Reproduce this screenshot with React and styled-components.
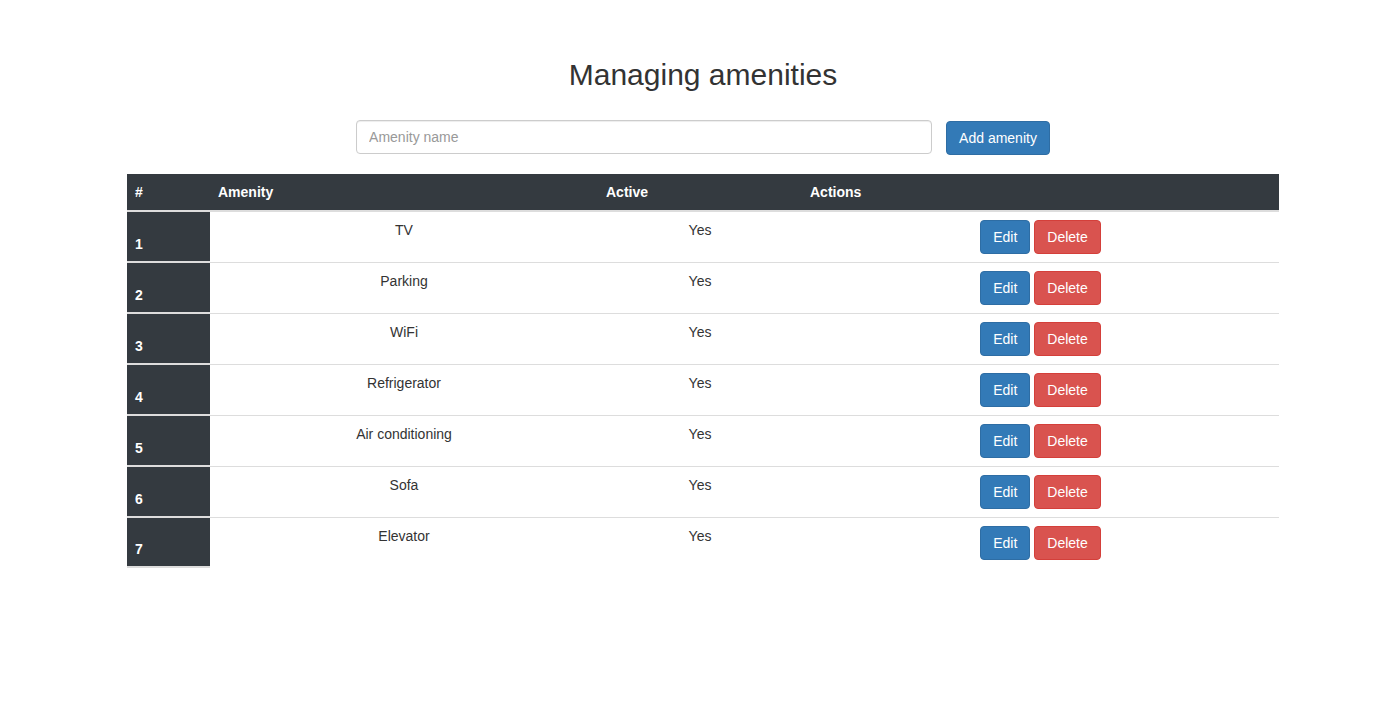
import React from 'react';
import styled, { createGlobalStyle } from 'styled-components';

const amenities = [
  { id: 1, name: 'TV', active: true },
  { id: 2, name: 'Parking', active: true },
  { id: 3, name: 'WiFi', active: true },
  { id: 4, name: 'Refrigerator', active: true },
  { id: 5, name: 'Air conditioning', active: true },
  { id: 6, name: 'Sofa', active: true },
  { id: 7, name: 'Elevator', active: true },
];

const GlobalStyle = createGlobalStyle`
  * { box-sizing: border-box; }
  body {
    margin: 0;
    background: #fff;
    color: #333;
    font-family: "Liberation Sans", Arial, Helvetica, sans-serif;
    font-size: 14px;
    line-height: 1.42857143;
  }
`;

const Page = styled.div`
  display: flex;
  flex-direction: column;
  align-items: center;
  padding: 58px 0 40px 7px;
`;

const Title = styled.h2`
  margin: 0 0 29px;
  font-size: 30px;
  font-weight: 500;
  line-height: 1.1;
  color: #333;
`;

const Form = styled.form`
  display: flex;
  align-items: flex-start;
  gap: 14px;
  margin-bottom: 19px;
`;

const Input = styled.input`
  width: 576px;
  height: 34px;
  padding: 6px 12px;
  border: 1px solid #ccc;
  border-radius: 4px;
  font: inherit;
  color: #555;
  box-shadow: inset 0 1px 1px rgba(0, 0, 0, 0.075);
  &::placeholder { color: #999; }
`;

const Button = styled.button`
  display: inline-block;
  height: 34px;
  padding: 6px 12px;
  border: 1px solid ${(p) => (p.$variant === 'danger' ? '#d43f3a' : '#2e6da4')};
  border-radius: 4px;
  background: ${(p) => (p.$variant === 'danger' ? '#d9534f' : '#337ab7')};
  color: #fff;
  font: inherit;
  line-height: 20px;
  cursor: pointer;
  margin-top: ${(p) => p.$offset || 0}px;
`;

const Table = styled.table`
  width: 1152px;
  border-collapse: separate;
  border-spacing: 0;
`;

const HeadCell = styled.th`
  width: ${(p) => p.$width}px;
  padding: 8px;
  background: #343a40;
  color: #fff;
  font-weight: bold;
  text-align: left;
  vertical-align: bottom;
  line-height: 20px;
  border-bottom: 2px solid #ddd;
`;

const RowHead = styled.th`
  padding: 8px;
  background: #343a40;
  color: #fff;
  font-weight: bold;
  text-align: left;
  vertical-align: bottom;
  line-height: 20px;
  border-top: ${(p) => (p.$first ? 'none' : '1px solid #ddd')};
  border-bottom: ${(p) => (p.$last ? '1px solid #ddd' : 'none')};
  box-shadow: inset 0 -1px 0 #ddd;
`;

const Cell = styled.td`
  padding: 8px;
  text-align: center;
  vertical-align: top;
  line-height: 20px;
  border-top: ${(p) => (p.$first ? 'none' : '1px solid #ddd')};
`;

const Actions = styled.div`
  display: flex;
  justify-content: center;
  gap: 4px;
`;

export default function App() {
  return (
    <>
      <GlobalStyle />
      <Page>
        <Title>Managing amenities</Title>
        <Form onSubmit={(e) => e.preventDefault()}>
          <Input placeholder="Amenity name" />
          <Button type="submit" $offset={1}>Add amenity</Button>
        </Form>
        <Table>
          <thead>
            <tr>
              <HeadCell $width={83}>#</HeadCell>
              <HeadCell $width={388}>Amenity</HeadCell>
              <HeadCell $width={204}>Active</HeadCell>
              <HeadCell $width={477}>Actions</HeadCell>
            </tr>
          </thead>
          <tbody>
            {amenities.map((a, i) => {
              const first = i === 0;
              const last = i === amenities.length - 1;
              return (
                <tr key={a.id}>
                  <RowHead scope="row" $first={first} $last={last}>{a.id}</RowHead>
                  <Cell $first={first}>{a.name}</Cell>
                  <Cell $first={first}>{a.active ? 'Yes' : 'No'}</Cell>
                  <Cell $first={first}>
                    <Actions>
                      <Button type="button">Edit</Button>
                      <Button type="button" $variant="danger">Delete</Button>
                    </Actions>
                  </Cell>
                </tr>
              );
            })}
          </tbody>
        </Table>
      </Page>
    </>
  );
}
